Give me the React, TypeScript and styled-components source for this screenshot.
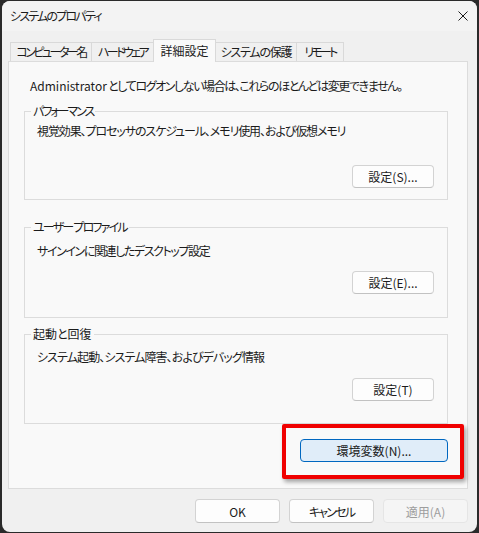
import styled, { createGlobalStyle } from 'styled-components';

const GlobalStyle = createGlobalStyle`
  html, body {
    margin: 0;
    padding: 0;
  }
  body {
    background: #2a2a2a;
    font-family: "Noto Sans CJK JP", "Noto Sans", sans-serif;
    font-feature-settings: "palt" 1;
    color: #1b1b1b;
  }
`;

// widths follow the original dialog tabs; kana runs are set tighter
const TABS = [
  { label: 'コンピューター名', width: 82, spacing: -2.5 },
  { label: 'ハードウェア', width: 63, spacing: -2.6 },
  { label: '詳細設定', width: 63, spacing: 0 },
  { label: 'システムの保護', width: 82, spacing: -1.2 },
  { label: 'リモート', width: 48, spacing: -2.8 },
];
const ACTIVE_TAB = 2;

const GROUPS = [
  {
    title: 'パフォーマンス',
    titleSpacing: -2,
    text: '視覚効果、プロセッサのスケジュール、メモリ使用、および仮想メモリ',
    textSpacing: -1.1,
    button: '設定(S)...',
    gap: 10,
    descTop: 5,
    buttonTop: 26,
    bottom: 11,
  },
  {
    title: 'ユーザー プロファイル',
    titleSpacing: -1.8,
    text: 'サインインに関連したデスクトップ設定',
    textSpacing: -1.4,
    button: '設定(E)...',
    gap: 20,
    descTop: 9,
    buttonTop: 12,
    bottom: 23,
  },
  {
    title: '起動と回復',
    titleSpacing: 0,
    text: 'システム起動、システム障害、およびデバッグ情報',
    textSpacing: -0.9,
    button: '設定(T)',
    gap: 9,
    descTop: 8,
    buttonTop: 13,
    bottom: 22,
  },
];

function CloseIcon() {
  return (
    <svg width="10" height="10" viewBox="0 0 10 10">
      <path d="M0.5 0.5 L9.5 9.5 M9.5 0.5 L0.5 9.5" stroke="#1b1b1b" strokeWidth="1" />
    </svg>
  );
}

export default function App() {
  return (
    <>
      <GlobalStyle />
      <Window>
        <TitleBar>
          <Title>システムのプロパティ</Title>
          <CloseButton>
            <CloseIcon />
          </CloseButton>
        </TitleBar>
        <Body>
          <TabRow>
            {TABS.map((t, i) => (
              <Tab key={t.label} $width={t.width} $spacing={t.spacing} $active={i === ACTIVE_TAB}>
                {t.label}
              </Tab>
            ))}
          </TabRow>
          <Panel>
            <Note>
              <Latin>Administrator</Latin> としてログオンしない場合は、これらのほとんどは変更できません。
            </Note>
            {GROUPS.map((g) => (
              <GroupBox key={g.title} $gap={g.gap} $bottom={g.bottom}>
                <Legend $spacing={g.titleSpacing}>{g.title}</Legend>
                <GroupText $top={g.descTop} $spacing={g.textSpacing}>
                  {g.text}
                </GroupText>
                <SettingsButton $top={g.buttonTop}>{g.button}</SettingsButton>
              </GroupBox>
            ))}
            <EnvRow>
              <Highlight>
                <EnvButton>環境変数(N)...</EnvButton>
              </Highlight>
            </EnvRow>
          </Panel>
          <Footer>
            <DialogButton>OK</DialogButton>
            <DialogButton $spacing={-1.8}>キャンセル</DialogButton>
            <DialogButton disabled>適用(A)</DialogButton>
          </Footer>
        </Body>
      </Window>
    </>
  );
}

const Window = styled.div`
  margin: 1px 0 0 2px;
  width: 475px;
  height: 531px;
  background: #f0f0f0;
  border-radius: 8px;
  overflow: hidden;
  display: flex;
  flex-direction: column;
`;

const TitleBar = styled.div`
  height: 30px;
  background: #f3f3f3;
  display: flex;
  align-items: center;
  justify-content: space-between;
  padding-left: 8px;
`;

const Title = styled.span`
  font-size: 12px;
  line-height: 16px;
  letter-spacing: -1.8px;
`;

const CloseButton = styled.div`
  display: flex;
  align-items: center;
  padding-right: 9px;
  height: 30px;
`;

const Body = styled.div`
  display: flex;
  flex-direction: column;
  padding: 0 9px 0 6px;
`;

const TabRow = styled.div`
  display: flex;
  align-items: flex-end;
  height: 22px;
  margin-top: 8px;
  padding-left: 2px;
  position: relative;
  z-index: 1;
`;

const Tab = styled.div<{ $active?: boolean; $width: number; $spacing: number }>`
  box-sizing: border-box;
  width: ${(p) => p.$width}px;
  height: ${(p) => (p.$active ? '23px' : '19px')};
  margin-bottom: ${(p) => (p.$active ? '-1px' : '0')};
  margin-left: -1px;
  padding-top: ${(p) => (p.$active ? '2px' : '0')};
  display: flex;
  justify-content: center;
  border: 1px solid #d9d9d9;
  border-bottom: none;
  background: ${(p) => (p.$active ? '#f9f9f9' : '#f0f0f0')};
  font-size: 12px;
  line-height: 17px;
  letter-spacing: ${(p) => p.$spacing}px;
  white-space: nowrap;

  &:first-child {
    margin-left: 0;
  }
`;

const Panel = styled.div`
  box-sizing: border-box;
  height: 428px;
  border: 1px solid #dcdcdc;
  background: #f9f9f9;
  display: flex;
  flex-direction: column;
  padding: 16px 19px 0 15px;
`;

const Note = styled.div`
  font-size: 12px;
  line-height: 16px;
  padding-left: 6px;
  letter-spacing: -1.4px;
  white-space: nowrap;
`;

const Latin = styled.span`
  letter-spacing: 0;
`;

const GroupBox = styled.fieldset<{ $gap: number; $bottom: number }>`
  margin: ${(p) => p.$gap}px 0 0;
  padding: 0 13px ${(p) => p.$bottom}px 6px;
  border: 1px solid #dcdcdc;
  min-width: 0;
  display: flex;
  flex-direction: column;
`;

const Legend = styled.legend<{ $spacing: number }>`
  padding: 0 2px;
  font-size: 12px;
  line-height: 14px;
  letter-spacing: ${(p) => p.$spacing}px;
`;

const GroupText = styled.div<{ $top: number; $spacing: number }>`
  margin-top: ${(p) => p.$top}px;
  padding-left: 6px;
  font-size: 12px;
  line-height: 16px;
  letter-spacing: ${(p) => p.$spacing}px;
  white-space: nowrap;
`;

const BaseButton = styled.button<{ $spacing?: number }>`
  box-sizing: border-box;
  height: 23px;
  font-family: inherit;
  font-feature-settings: "palt" 1;
  font-size: 12px;
  letter-spacing: ${(p) => p.$spacing ?? 0}px;
  color: #1b1b1b;
  background: #fdfdfd;
  border: 1px solid #d3d3d3;
  border-bottom-color: #c2c2c2;
  border-radius: 4px;
  padding: 0;
`;

const SettingsButton = styled(BaseButton)<{ $top: number }>`
  align-self: flex-end;
  width: 82px;
  margin-top: ${(p) => p.$top}px;
`;

const EnvRow = styled.div`
  display: flex;
  justify-content: flex-end;
  margin-top: 15px;
`;

const Highlight = styled.div`
  margin: -15px -16px -17px -18px;
  padding: 11px 12px 13px 14px;
  border: 4px solid #f00000;
  border-radius: 2px;
  box-shadow: 2px 3px 4px rgba(0, 0, 0, 0.35);
`;

const EnvButton = styled(BaseButton)`
  display: block;
  width: 148px;
  background: #e0edf9;
  border: 1px solid #0067c0;
`;

const Footer = styled.div`
  display: flex;
  justify-content: flex-end;
  gap: 9px;
  margin-top: 10px;
`;

const DialogButton = styled(BaseButton)`
  width: 85px;
  height: 24px;

  &:disabled {
    color: #9d9d9d;
    background: #f5f5f5;
    border-color: #e5e5e5;
  }
`;
